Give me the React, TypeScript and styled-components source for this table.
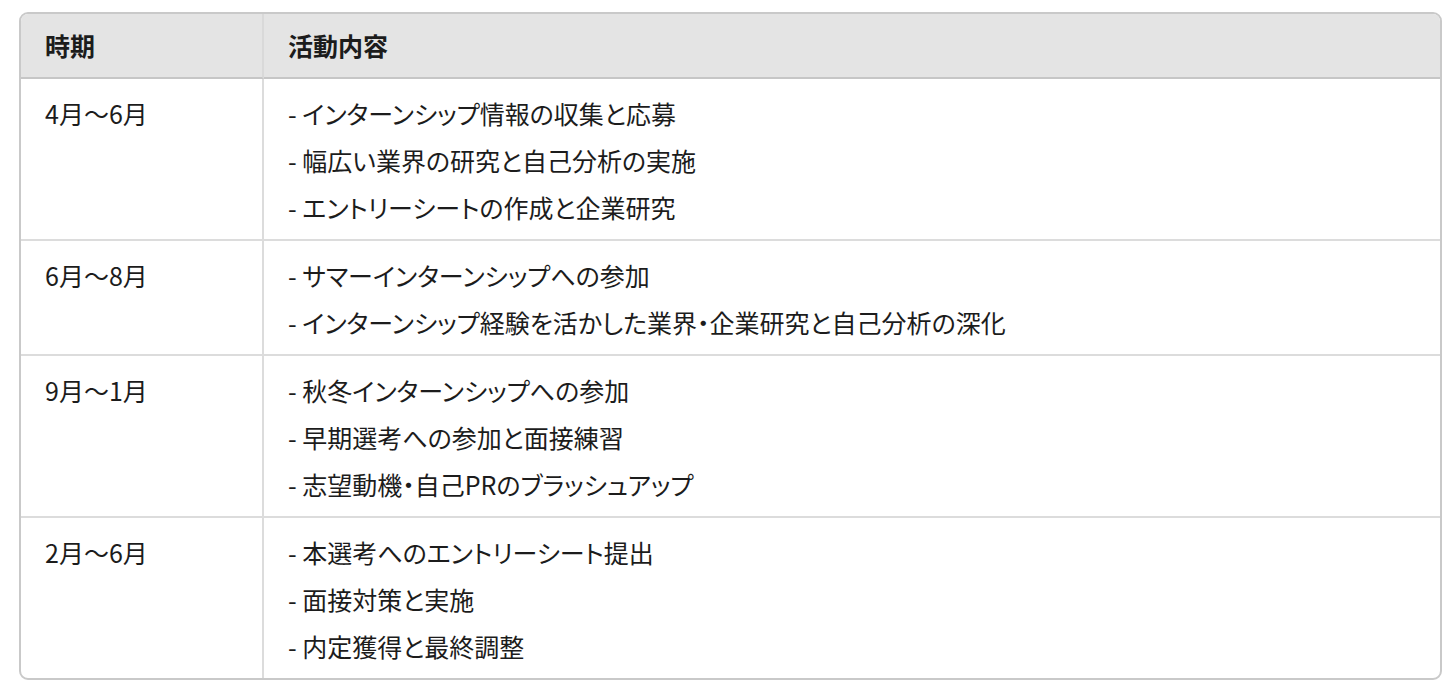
import React from 'react';
import styled, { createGlobalStyle } from 'styled-components';

const GlobalStyle = createGlobalStyle`
  body {
    margin: 0;
    background: #ffffff;
    font-family: 'Noto Sans CJK JP', 'Noto Sans', sans-serif;
    color: #1c1c1c;
  }
`;

const Page = styled.div`
  padding: 12px 12px 12px 19px;
`;

const Table = styled.table`
  width: 100%;
  border-collapse: separate;
  border-spacing: 0;
  border: 2px solid #c9c9c9;
  border-radius: 9px;
  overflow: hidden;
  font-size: 25px;
  font-feature-settings: 'palt';
  table-layout: fixed;
`;

const HeadCell = styled.th<{ $last?: boolean }>`
  background: #e4e4e4;
  text-align: left;
  font-weight: 700;
  line-height: 45px;
  padding: 9px 24px;
  border-bottom: 2px solid #c6c6c6;
  border-right: ${({ $last }) => ($last ? 'none' : '2px solid #d9d9d9')};
`;

const Cell = styled.td<{ $last?: boolean; $bottom?: boolean }>`
  vertical-align: top;
  padding: 11px 24px 8px 24px;
  line-height: 47px;
  border-bottom: ${({ $bottom }) => ($bottom ? 'none' : '2px solid #dcdcdc')};
  border-right: ${({ $last }) => ($last ? 'none' : '2px solid #dcdcdc')};
`;

const ItemList = styled.ul`
  list-style: none;
  margin: 0;
  padding: 0;
`;

const Item = styled.li`
  margin: 0;
`;

const rows = [
  {
    period: '4月～6月',
    items: [
      'インターンシップ情報の収集と応募',
      '幅広い業界の研究と自己分析の実施',
      'エントリーシートの作成と企業研究'
    ]
  },
  {
    period: '6月～8月',
    items: [
      'サマーインターンシップへの参加',
      'インターンシップ経験を活かした業界・企業研究と自己分析の深化'
    ]
  },
  {
    period: '9月～1月',
    items: [
      '秋冬インターンシップへの参加',
      '早期選考への参加と面接練習',
      '志望動機・自己PRのブラッシュアップ'
    ]
  },
  {
    period: '2月～6月',
    items: [
      '本選考へのエントリーシート提出',
      '面接対策と実施',
      '内定獲得と最終調整'
    ]
  }
];

export const App: React.FC = () => {
  return (
    <Page>
      <GlobalStyle />
      <Table>
        <colgroup>
          <col style={{ width: '243px' }} />
          <col />
        </colgroup>
        <thead>
          <tr>
            <HeadCell>時期</HeadCell>
            <HeadCell $last={true}>活動内容</HeadCell>
          </tr>
        </thead>
        <tbody>
          {rows.map((row, i) => (
            <tr key={row.period}>
              <Cell $bottom={i === rows.length - 1}>{row.period}</Cell>
              <Cell $last={true} $bottom={i === rows.length - 1}>
                <ItemList>
                  {row.items.map((item) => (
                    <Item key={item}>- {item}</Item>
                  ))}
                </ItemList>
              </Cell>
            </tr>
          ))}
        </tbody>
      </Table>
    </Page>
  );
};

export default App;
